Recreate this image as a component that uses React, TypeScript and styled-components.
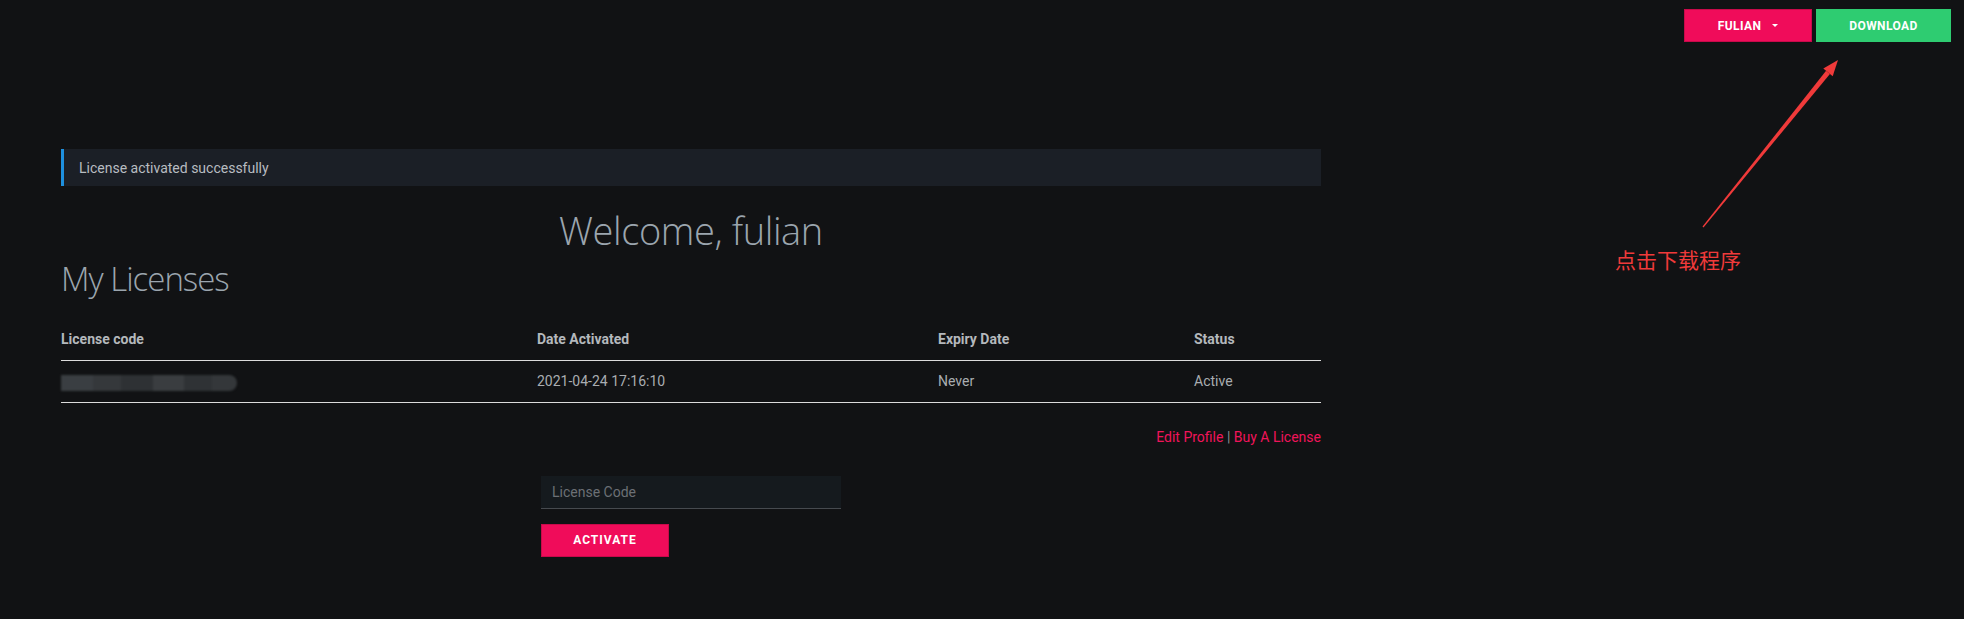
import React from "react";
import styled, { createGlobalStyle } from "styled-components";

const GlobalStyle = createGlobalStyle`
  html, body {
    margin: 0;
    padding: 0;
    background: #111214;
  }
  body {
    font-family: Roboto, "Liberation Sans", sans-serif;
    font-size: 14px;
    color: #b0b4b8;
  }
  * {
    box-sizing: border-box;
  }
`;

const Page = styled.div`
  position: relative;
  width: 1964px;
  height: 619px;
  overflow: hidden;
  background: #111214;
`;

const TopBar = styled.div`
  display: flex;
  justify-content: flex-end;
  gap: 4px;
  padding: 9px 13px 0 0;
  height: 42px;
`;

const TopButton = styled.button<{ $variant: "pink" | "green"; $w: number }>`
  display: flex;
  align-items: center;
  justify-content: center;
  gap: 11px;
  width: ${(p) => p.$w}px;
  height: 33px;
  border: 1px solid ${(p) => (p.$variant === "pink" ? "#c80a4a" : "#2ecc71")};
  background: ${(p) => (p.$variant === "pink" ? "#f00c5a" : "#2ecc71")};
  color: #fff;
  font-family: Roboto, sans-serif;
  font-weight: 700;
  font-size: 12px;
  letter-spacing: 0.4px;
  padding: 0;
  cursor: pointer;
`;

const Caret = styled.span`
  width: 0;
  height: 0;
  border-left: 3px solid transparent;
  border-right: 3px solid transparent;
  border-top: 3px solid #fff;
`;

const Main = styled.main`
  width: 1260px;
  margin-left: 61px;
  padding-top: 107px;
`;

const Alert = styled.div`
  height: 37px;
  display: flex;
  align-items: center;
  padding-left: 15px;
  background: #1b1f26;
  border-left: 3px solid #1e90de;
  color: #b8bcc1;
  font-size: 14px;
`;

const Welcome = styled.h1`
  margin: 21px 0 0;
  text-align: center;
  font-family: "Segoe UI", "Open Sans", sans-serif;
  font-weight: 300;
  font-size: 38px;
  letter-spacing: -0.4px;
  line-height: 46px;
  color: #9ba5ae;
`;

const Title = styled.h2`
  margin: 5px 0 0;
  font-family: "Segoe UI", "Open Sans", sans-serif;
  font-weight: 300;
  font-size: 33px;
  letter-spacing: -1px;
  line-height: 42px;
  color: #9ba5ae;
`;

const Table = styled.table`
  width: 100%;
  margin-top: 18px;
  border-collapse: collapse;
`;

const Th = styled.th<{ $w?: number }>`
  width: ${(p) => (p.$w ? `${p.$w}px` : "auto")};
  height: 42px;
  padding: 0;
  text-align: left;
  font-weight: 700;
  font-size: 14px;
  color: #b4b8bc;
  border-bottom: 1px solid #dcdcdc;
`;

const Td = styled.td`
  height: 42px;
  padding: 0;
  font-size: 14px;
  color: #a9adb1;
  border-bottom: 1px solid #dcdcdc;
`;

const Blur = styled.span`
  display: block;
  width: 176px;
  height: 16px;
  margin-top: 4px;
  border-radius: 0 8px 8px 0;
  background: linear-gradient(
    90deg,
    #3a3e42 0 18%,
    #35383b 18% 34%,
    #2e3134 34% 52%,
    #3a3d40 52% 70%,
    #2f3235 70% 86%,
    #34373a 86% 100%
  );
  filter: blur(1px);
`;

const Links = styled.div`
  margin-top: 24px;
  text-align: right;
  font-size: 14px;
  line-height: 20px;
  color: #f0145a;
`;

const Sep = styled.span`
  color: #8a8f94;
`;

const Form = styled.div`
  width: 300px;
  margin: 29px auto 0;
  display: flex;
  flex-direction: column;
  gap: 15px;
`;

const Input = styled.input`
  width: 300px;
  height: 33px;
  padding: 0 11px;
  border: none;
  border-bottom: 1px solid #464a4f;
  background: #151a1e;
  color: #ccc;
  font-family: Roboto, sans-serif;
  font-size: 14px;
  outline: none;
  &::placeholder {
    color: #6c7075;
  }
`;

const ActivateButton = styled.button`
  width: 128px;
  height: 33px;
  border: 1px solid #c80a4a;
  background: #f00c5a;
  color: #fff;
  font-family: Roboto, sans-serif;
  font-weight: 700;
  font-size: 12px;
  letter-spacing: 1px;
  cursor: pointer;
`;

const ArrowSvg = styled.svg`
  position: absolute;
  left: 1690px;
  top: 50px;
`;

const Note = styled.div`
  position: absolute;
  left: 1615px;
  top: 248px;
  font-family: "Microsoft YaHei", "Noto Sans CJK SC", sans-serif;
  font-size: 21px;
  line-height: 22px;
  color: #f03a3a;
`;

export default function App() {
  return (
    <Page>
      <GlobalStyle />
      <TopBar>
        <TopButton $variant="pink" $w={128}>
          FULIAN <Caret />
        </TopButton>
        <TopButton $variant="green" $w={135}>
          DOWNLOAD
        </TopButton>
      </TopBar>

      <Main>
        <Alert>License activated successfully</Alert>
        <Welcome>Welcome, fulian</Welcome>
        <Title>My Licenses</Title>

        <Table>
          <thead>
            <tr>
              <Th $w={476}>License code</Th>
              <Th $w={401}>Date Activated</Th>
              <Th $w={256}>Expiry Date</Th>
              <Th>Status</Th>
            </tr>
          </thead>
          <tbody>
            <tr>
              <Td>
                <Blur />
              </Td>
              <Td>2021-04-24 17:16:10</Td>
              <Td>Never</Td>
              <Td>Active</Td>
            </tr>
          </tbody>
        </Table>

        <Links>
          Edit Profile <Sep>|</Sep> Buy A License
        </Links>

        <Form>
          <Input placeholder="License Code" />
          <div>
            <ActivateButton>ACTIVATE</ActivateButton>
          </div>
        </Form>
      </Main>

      <ArrowSvg width="160" height="190" viewBox="0 0 160 190">
        <polygon points="13.5,177.4 12.5,176.6 136.1,20.8 139.9,24" fill="#f03a3a" />
        <polygon points="148,10 142.7,26.2 133.3,18.6" fill="#f03a3a" />
      </ArrowSvg>
      <Note>点击下载程序</Note>
    </Page>
  );
}
